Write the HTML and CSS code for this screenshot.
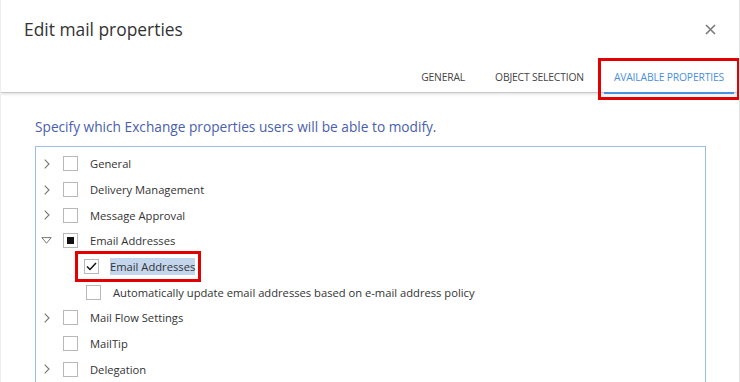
FILE: index.html
```html
<!DOCTYPE html>
<html lang="en">
<head>
  <meta charset="UTF-8">
  <title>Edit mail properties</title>
  <link rel="stylesheet" href="styles.css">
</head>
<body>

  <div class="dialog">
    <!-- Header with title and tabs -->
    <div class="header">
      <div class="title-row">
        <h1 class="title">Edit mail properties</h1>
        <span class="close">
          <svg width="11" height="11" viewBox="0 0 11 11"><path d="M1 1 L10 10 M10 1 L1 10" stroke="#7a7a7a" stroke-width="1.6"/></svg>
        </span>
      </div>
      <div class="tabs">
        <span class="tab">GENERAL</span>
        <span class="tab">OBJECT SELECTION</span>
        <span class="tab active">AVAILABLE PROPERTIES</span>
      </div>
    </div>

    <div class="content">
      <p class="intro">Specify which Exchange properties users will be able to modify.</p>

      <div class="tree">
        <div class="row">
          <span class="arrow"><svg width="6" height="10" viewBox="0 0 6 10"><path d="M0.7 0.7 L5 5 L0.7 9.3" fill="none" stroke="#777" stroke-width="1.1"/></svg></span>
          <span class="box"></span><span class="label">General</span>
        </div>
        <div class="row">
          <span class="arrow"><svg width="6" height="10" viewBox="0 0 6 10"><path d="M0.7 0.7 L5 5 L0.7 9.3" fill="none" stroke="#777" stroke-width="1.1"/></svg></span>
          <span class="box"></span><span class="label">Delivery Management</span>
        </div>
        <div class="row">
          <span class="arrow"><svg width="6" height="10" viewBox="0 0 6 10"><path d="M0.7 0.7 L5 5 L0.7 9.3" fill="none" stroke="#777" stroke-width="1.1"/></svg></span>
          <span class="box"></span><span class="label">Message Approval</span>
        </div>
        <div class="row">
          <span class="arrow open"><svg width="11" height="7" viewBox="0 0 11 7"><path d="M0.8 0.6 L10.2 0.6 L5.5 6.2 Z" fill="none" stroke="#777" stroke-width="1"/></svg></span>
          <span class="box partial"></span><span class="label">Email Addresses</span>
        </div>
        <div class="row child">
          <div class="marked">
            <span class="box">
              <svg width="11" height="9" viewBox="0 0 11 9"><path d="M1 4.5 L4 7.5 L10 1" fill="none" stroke="#111" stroke-width="1.5"/></svg>
            </span>
            <span class="label selected">Email Addresses</span>
          </div>
        </div>
        <div class="row child"><span class="box"></span><span class="label">Automatically update email addresses based on e-mail address policy</span></div>
        <div class="row">
          <span class="arrow"><svg width="6" height="10" viewBox="0 0 6 10"><path d="M0.7 0.7 L5 5 L0.7 9.3" fill="none" stroke="#777" stroke-width="1.1"/></svg></span>
          <span class="box"></span><span class="label">Mail Flow Settings</span>
        </div>
        <div class="row"><span class="arrow"></span><span class="box"></span><span class="label">MailTip</span></div>
        <div class="row">
          <span class="arrow"><svg width="6" height="10" viewBox="0 0 6 10"><path d="M0.7 0.7 L5 5 L0.7 9.3" fill="none" stroke="#777" stroke-width="1.1"/></svg></span>
          <span class="box"></span><span class="label">Delegation</span>
        </div>
      </div>
    </div>
  </div>

</body>
</html>
```

FILE: styles.css
```css
* {
  box-sizing: border-box;
}

body {
  margin: 0;
  font-family: 'Open Sans', 'Noto Sans', sans-serif;
  color: #333;
  background: #fff;
}

.dialog {
  height: 382px;
  overflow: hidden;
  border-left: 1px solid #eee;
  border-right: 1px solid #e4e4e4;
}

.header {
  height: 93px;
  border-bottom: 1px solid #c8c8c8;
  box-shadow: 0 1px 3px rgba(0, 0, 0, 0.15);
  display: flex;
  flex-direction: column;
}

.title-row {
  display: flex;
  justify-content: space-between;
  align-items: center;
  padding: 14px 23px 0 23px;
}

.title {
  margin: 0;
  font-size: 17.4px;
  font-weight: 400;
  color: #333;
  line-height: 30px;
}

.close {
  display: flex;
}

.tabs {
  display: flex;
  justify-content: flex-end;
  margin-top: 18px;
  padding-right: 5px;
}

.tab {
  font-size: 10.3px;
  color: #444;
  padding: 8px 15px 10px;
  letter-spacing: -0.15px;
}

.tab.active {
  color: #4a8fe0;
  border-bottom: 2px solid #4a8fe0;
  outline: 3px solid #e30000;
  outline-offset: 3px;
  margin: 2px 0 0 5px;
  padding: 6px 10px 6px 10px;
}

.content {
  padding: 0 33px 0 34px;
}

.intro {
  margin: 24px 0 10px 0;
  font-size: 13.7px;
  color: #4a60ad;
}

.tree {
  border: 1px solid #9dbde4;
  border-bottom: none;
  padding-top: 4px;
  height: 240px;
}

.row {
  display: flex;
  align-items: center;
  height: 25.7px;
  font-size: 11.2px;
}

.arrow {
  width: 27px;
  padding-left: 8px;
  display: flex;
  align-items: center;
}

.arrow.open {
  padding-left: 5px;
}

.box {
  width: 15px;
  height: 15px;
  border: 1px solid #b8b8b8;
  background: #fff;
  margin-right: 12px;
  display: flex;
  align-items: center;
  justify-content: center;
}

.box.partial::after {
  content: "";
  width: 7px;
  height: 7px;
  background: #111;
}

.child {
  padding-left: 50px;
}

.marked {
  display: flex;
  align-items: center;
  outline: 3px solid #e30000;
  outline-offset: 1px;
  padding: 3px 2px 3px 5px;
  margin-left: -7px;
}

.marked .box {
  margin-right: 11px;
}

.selected {
  background: #c3d6ee;
  padding: 1px 0;
}
```
